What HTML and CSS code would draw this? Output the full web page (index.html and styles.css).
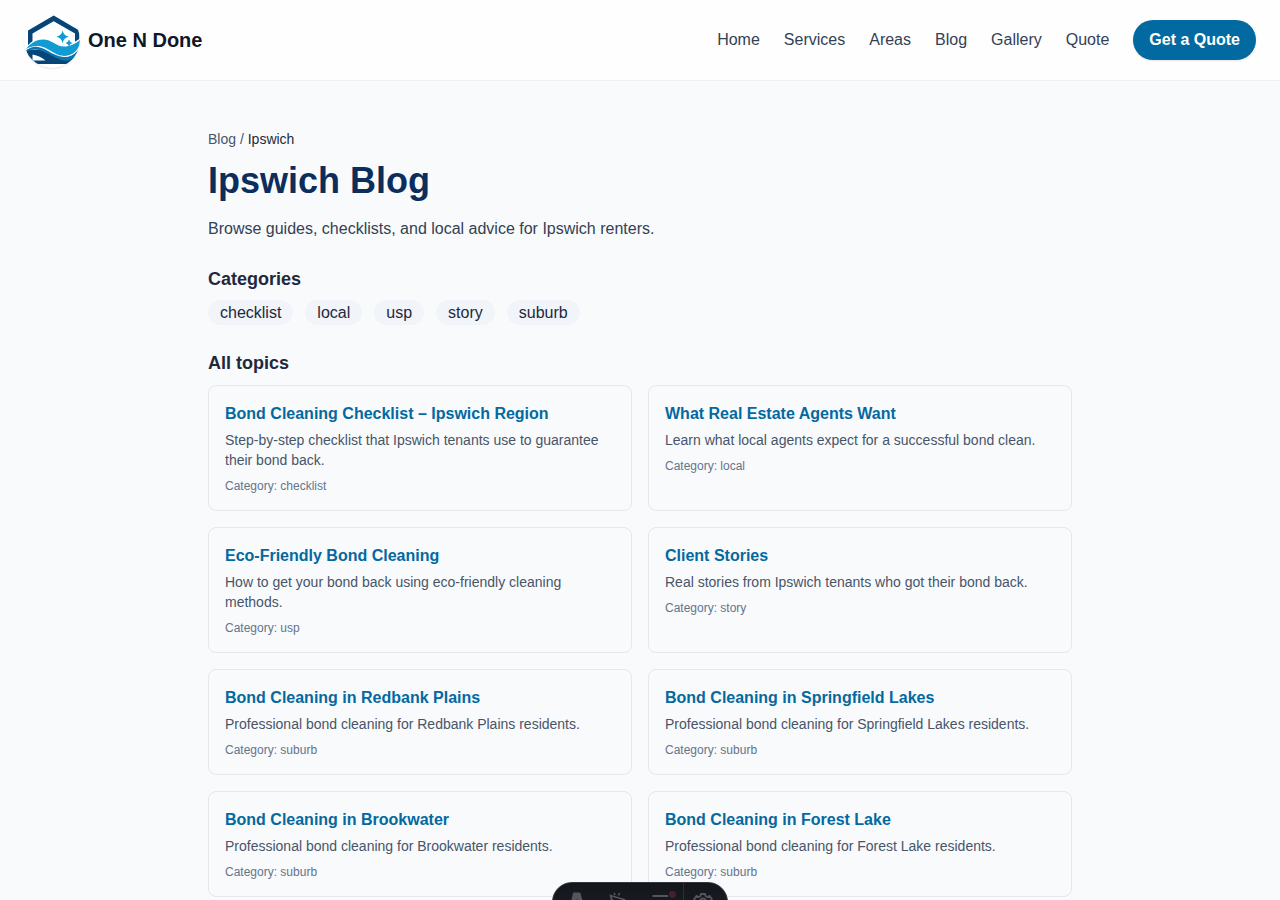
FILE: index.html
```html
<!DOCTYPE html>
<html lang="en">
<head>
<meta charset="utf-8">
<meta name="viewport" content="width=device-width, initial-scale=1">
<title>Ipswich Blog | One N Done</title>
<link rel="stylesheet" href="styles.css">
</head>
<body>
<header class="site-header">
  <a class="brand" href="#">
    <svg class="brand-logo" viewBox="0 0 56 56" aria-hidden="true">
      <path d="M4 34V18.500L29.700 3.500 55.300 18.500V34H51V21.500L29.700 9.200 8.500 21.500V34Z" fill="#064577"/>
      <path d="M1.500 37C5 30 12 26.500 19 26.500C28 26.500 32 33 40 33C46 33 51 30 56 26.500V34L50 47H8L2 39Z" fill="#fff"/>
      <path d="M3 37.500H15L40 45H51.500L46 52H8Q4.500 48 3 42Z" fill="#064577"/>
      <path d="M2 37C7 30.500 13 27.500 19 27.500C28 27.500 32 34.500 40 34.500C46 34.500 51 32 56 28C56 37.500 49 44 40 44C30 44 24 34 13 34C9 34 5 35 2 37Z" fill="#129bd3"/>
      <path d="M2 38.500C6 35.500 9 34.600 13 34.800C23 35.500 29 45 40 45C46 45 51 42 54.500 37C53 43 50 46.500 46 48C33 51 27 40 13 37.500C9 37 5 38 2.500 40Z" fill="#0b75af"/>
      <path d="M13 34.300C23 34.700 29 44.500 40 44.500C46 44.500 51 42 54.500 37" fill="none" stroke="#fff" stroke-width=".8"/>
      <path d="M8.500 42.500C14 43.500 18 45.500 21.500 48.500H8.500Z" fill="#fff"/>
      <path d="M38.600 18.500Q39.700 23.800 45 24.800Q39.700 25.800 38.600 31.200Q37.500 25.800 32.200 24.800Q37.500 23.800 38.600 18.500ZM45 27.500Q45.700 30.300 48.500 31Q45.700 31.700 45 34.500Q44.300 31.700 41.500 31Q44.300 30.300 45 27.500Z" fill="#129bd3"/>
    </svg>
    <span>One N Done</span>
  </a>
  <nav class="site-nav" aria-label="Main">
    <a href="#">Home</a>
    <a href="#">Services</a>
    <a href="#">Areas</a>
    <a href="#">Blog</a>
    <a href="#">Gallery</a>
    <a href="#">Quote</a>
    <a class="quote-link" href="#">Get a Quote</a>
  </nav>
</header>

<main class="page">
  <nav class="breadcrumb" aria-label="Breadcrumb"><a href="#">Blog</a> / <span class="breadcrumb-current">Ipswich</span></nav>
  <h1 class="page-title">Ipswich Blog</h1>
  <p class="intro">Browse guides, checklists, and local advice for Ipswich renters.</p>

  <h2 class="section-title">Categories</h2>
  <ul class="tags">
    <li><a class="tag" href="#">checklist</a></li>
    <li><a class="tag" href="#">local</a></li>
    <li><a class="tag" href="#">usp</a></li>
    <li><a class="tag" href="#">story</a></li>
    <li><a class="tag" href="#">suburb</a></li>
  </ul>

  <h2 class="section-title">All topics</h2>
  <ul class="topics">
    <li class="card">
      <h3 class="card-title"><a href="#">Bond Cleaning Checklist – Ipswich Region</a></h3>
      <p class="card-text">Step-by-step checklist that Ipswich tenants use to guarantee their bond back.</p>
      <p class="card-category">Category: checklist</p>
    </li>
    <li class="card">
      <h3 class="card-title"><a href="#">What Real Estate Agents Want</a></h3>
      <p class="card-text">Learn what local agents expect for a successful bond clean.</p>
      <p class="card-category">Category: local</p>
    </li>
    <li class="card">
      <h3 class="card-title"><a href="#">Eco-Friendly Bond Cleaning</a></h3>
      <p class="card-text">How to get your bond back using eco-friendly cleaning methods.</p>
      <p class="card-category">Category: usp</p>
    </li>
    <li class="card">
      <h3 class="card-title"><a href="#">Client Stories</a></h3>
      <p class="card-text">Real stories from Ipswich tenants who got their bond back.</p>
      <p class="card-category">Category: story</p>
    </li>
    <li class="card">
      <h3 class="card-title"><a href="#">Bond Cleaning in Redbank Plains</a></h3>
      <p class="card-text">Professional bond cleaning for Redbank Plains residents.</p>
      <p class="card-category">Category: suburb</p>
    </li>
    <li class="card">
      <h3 class="card-title"><a href="#">Bond Cleaning in Springfield Lakes</a></h3>
      <p class="card-text">Professional bond cleaning for Springfield Lakes residents.</p>
      <p class="card-category">Category: suburb</p>
    </li>
    <li class="card">
      <h3 class="card-title"><a href="#">Bond Cleaning in Brookwater</a></h3>
      <p class="card-text">Professional bond cleaning for Brookwater residents.</p>
      <p class="card-category">Category: suburb</p>
    </li>
    <li class="card">
      <h3 class="card-title"><a href="#">Bond Cleaning in Forest Lake</a></h3>
      <p class="card-text">Professional bond cleaning for Forest Lake residents.</p>
      <p class="card-category">Category: suburb</p>
    </li>
  </ul>
</main>

<div class="toolbar" role="toolbar" aria-label="Developer tools">
  <button class="tool" type="button" aria-label="Menu">
    <svg viewBox="0 0 20 20" aria-hidden="true"><path d="M6 1.200Q6.300 .500 7 .500H12.500Q13.200 .500 13.500 1.200L18 18H13L10 6.500L7 18H2Z" fill="currentColor"/></svg>
  </button>
  <button class="tool" type="button" aria-label="Inspect">
    <svg viewBox="0 0 20 20" aria-hidden="true"><path d="M3.500 3.500L17 7.500 11.500 11 9 17ZM3.500 3.500L5 10M8 3L7.200 .800M11.500 3.500L12.700 1" fill="none" stroke="currentColor" stroke-width="1.500"/></svg>
  </button>
  <button class="tool" type="button" aria-label="Audit">
    <svg viewBox="0 0 20 20" aria-hidden="true"><path d="M1.500 4H17M1.500 10H17M1.500 16H17" fill="none" stroke="currentColor" stroke-width="2"/></svg>
    <span class="notice"></span>
  </button>
  <button class="tool tool-settings" type="button" aria-label="Settings">
    <svg viewBox="0 0 20 20" aria-hidden="true"><path d="M8 2H12L12.500 4 14.500 5 16.500 4 18.800 7 17.500 9 19 11 16.500 15 13 16 11.500 18.500H8.500L7 16 3.500 15 1 11 2.500 9 1.200 7 3.500 4 5.500 5 7.500 4Z" fill="none" stroke="currentColor" stroke-width="1.800"/><circle cx="10" cy="10" r="3.500" fill="none" stroke="currentColor" stroke-width="1.800"/></svg>
  </button>
</div>
</body>
</html>
```
FILE: styles.css
```css
* {
  box-sizing: border-box;
  margin: 0;
  padding: 0;
}

body {
  background: #f9fafc;
  color: #1e293b;
  font-family: "Liberation Sans", Arial, sans-serif;
  font-size: 16px;
  line-height: 24px;
}

a {
  color: inherit;
  text-decoration: none;
}

ul {
  list-style: none;
}

.site-header {
  display: flex;
  align-items: center;
  justify-content: space-between;
  padding: 12px 24px;
  background: #fefefe;
  border-bottom: 1px solid #eef2f7;
}

.brand {
  display: flex;
  align-items: center;
  gap: 8px;
  color: #0f172a;
  font-size: 20px;
  font-weight: 700;
  line-height: 28px;
}

.brand-logo {
  width: 56px;
  height: 56px;
  border-radius: 50%;
  background: #fff;
  box-shadow: 0 1px 2px rgba(0, 0, 0, 0.1);
}

.site-nav {
  display: flex;
  align-items: center;
  gap: 24px;
  color: #334155;
}

.quote-link {
  padding: 8px 16px;
  border-radius: 20px;
  background: #0369a1;
  box-shadow: 0 1px 2px rgba(0, 0, 0, 0.1);
  color: #fff;
  font-weight: 700;
}

.page {
  max-width: 896px;
  margin: 0 auto;
  padding: 48px 16px;
}

.breadcrumb {
  margin-bottom: 12px;
  color: #475569;
  font-size: 14px;
  line-height: 20px;
}

.breadcrumb-current {
  color: #1e293b;
}

.page-title {
  margin-bottom: 16px;
  color: #0b2e5c;
  font-size: 36px;
  line-height: 40px;
}

.intro {
  margin-bottom: 24px;
  color: #334155;
}

.section-title {
  margin-bottom: 8px;
  font-size: 18px;
  line-height: 28px;
}

.tags {
  display: flex;
  flex-wrap: wrap;
  gap: 12px;
  margin-bottom: 24px;
}

.tag {
  padding: 4px 12px;
  border-radius: 16px;
  background: #f1f4f9;
}

.topics {
  display: grid;
  grid-template-columns: repeat(2, minmax(0, 1fr));
  gap: 16px;
}

.card {
  padding: 16px;
  border: 1px solid #e5e7eb;
  border-radius: 8px;
}

.card-title {
  color: #0369a1;
  font-size: 16px;
}

.card-text {
  margin-top: 4px;
  color: #475569;
  font-size: 14px;
  line-height: 20px;
}

.card-category {
  margin-top: 8px;
  color: #64748b;
  font-size: 12px;
  line-height: 16px;
}

.toolbar {
  position: fixed;
  bottom: -22px;
  left: 50%;
  display: flex;
  height: 40px;
  overflow: hidden;
  border: 1px solid #343841;
  border-radius: 20px;
  background: linear-gradient(#14161c, #1b1e26);
  transform: translateX(-50%);
}

.tool {
  position: relative;
  display: flex;
  align-items: center;
  justify-content: center;
  width: 44px;
  border: 0;
  background: none;
  color: #53565c;
}

.tool:first-child {
  width: 42px;
  padding-left: 6px;
}

.tool svg {
  width: 20px;
  height: 20px;
}

.tool-settings {
  padding-right: 5px;
  border-left: 1px solid #2b2e36;
}

.notice {
  position: absolute;
  top: 8px;
  right: 7px;
  width: 7px;
  height: 7px;
  border-radius: 50%;
  background: #46202e;
}

@media (max-width: 760px) {
  .site-header,
  .site-nav {
    flex-wrap: wrap;
  }

  .topics {
    grid-template-columns: minmax(0, 1fr);
  }
}
```
